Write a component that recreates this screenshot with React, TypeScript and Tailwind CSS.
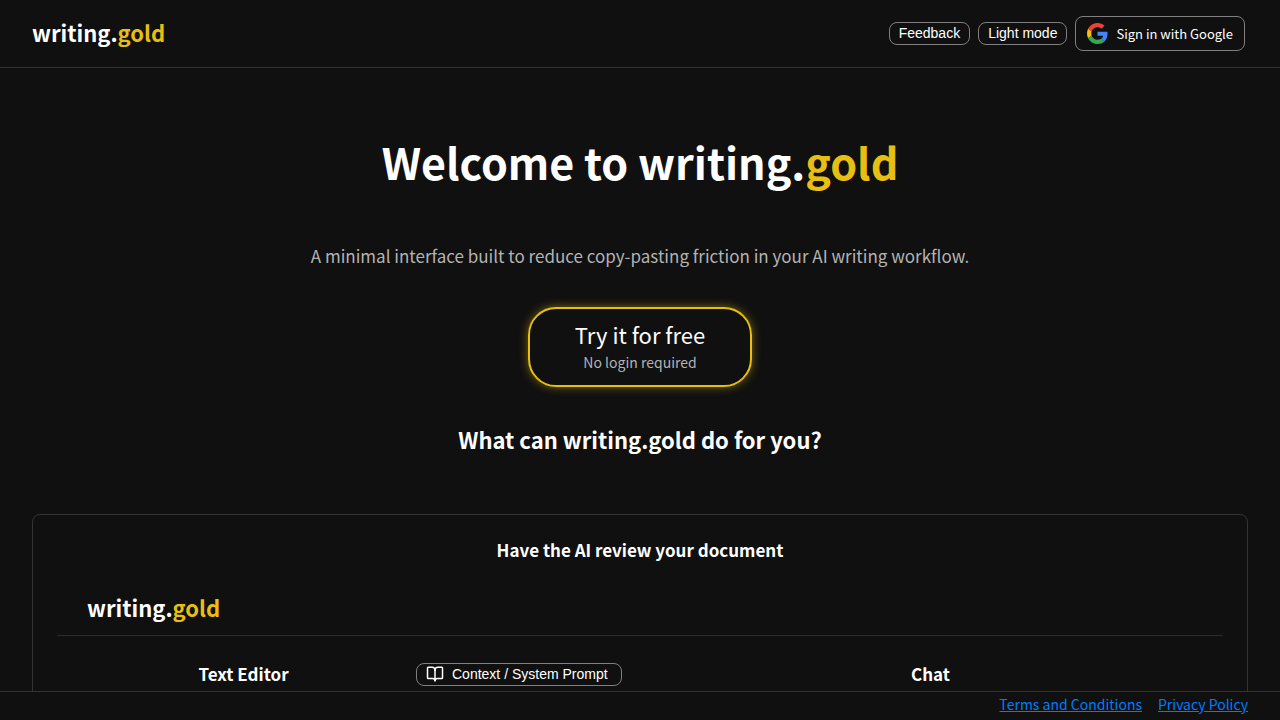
import { BookOpen } from "lucide-react";
import type { ReactNode } from "react";

function Brand() {
  return (
    <>
      writing.<span className="text-[#e6bf12]">gold</span>
    </>
  );
}

function GoogleIcon() {
  return (
    <svg viewBox="0 0 48 48" className="size-[21px]" aria-hidden="true">
      <path
        fill="#EA4335"
        d="M24 9.5c3.54 0 6.71 1.22 9.21 3.6l6.85-6.85C35.9 2.38 30.47 0 24 0 14.62 0 6.51 5.38 2.56 13.22l7.98 6.19C12.43 13.72 17.74 9.5 24 9.5z"
      />
      <path
        fill="#4285F4"
        d="M46.98 24.55c0-1.57-.15-3.09-.38-4.55H24v9.02h12.94c-.58 2.96-2.26 5.48-4.78 7.18l7.73 6c4.51-4.18 7.09-10.36 7.09-17.65z"
      />
      <path
        fill="#FBBC05"
        d="M10.53 28.59c-.48-1.45-.76-2.99-.76-4.59s.27-3.14.76-4.59l-7.98-6.19C.92 16.46 0 20.12 0 24c0 3.88.92 7.54 2.56 10.78l7.97-6.19z"
      />
      <path
        fill="#34A853"
        d="M24 48c6.48 0 11.93-2.13 15.89-5.81l-7.73-6c-2.15 1.45-4.92 2.3-8.16 2.3-6.26 0-11.57-4.22-13.47-9.91l-7.98 6.19C6.51 42.62 14.62 48 24 48z"
      />
    </svg>
  );
}

function SmallButton({ children }: { children: ReactNode }) {
  return (
    <button
      type="button"
      className="flex items-center gap-2 rounded-lg border border-[#808080] px-[9px] pb-px font-['Liberation_Sans',Arial,sans-serif] text-sm leading-5 whitespace-nowrap text-white"
    >
      {children}
    </button>
  );
}

export default function App() {
  return (
    <div className="flex h-screen flex-col bg-[#101010] font-['Noto_Sans_CJK_SC','Noto_Sans',sans-serif] text-white">
      <header className="flex shrink-0 items-center justify-between border-b border-[#333] py-4 pr-[35px] pl-8">
        <div className="pb-1 text-[22px] leading-7 font-bold">
          <Brand />
        </div>
        <div className="flex items-center gap-2">
          <SmallButton>Feedback</SmallButton>
          <SmallButton>Light mode</SmallButton>
          <button
            type="button"
            className="flex h-[35px] items-center gap-2 rounded-lg border border-[#808080] px-[11px] text-[13px]"
          >
            <GoogleIcon />
            Sign in with Google
          </button>
        </div>
      </header>

      <main className="flex min-h-0 flex-1 flex-col items-center overflow-y-auto px-8 [scrollbar-width:none]">
        <h1 className="mt-[61px] text-[43px] leading-16 font-bold">
          Welcome to <Brand />
        </h1>
        <p className="mt-[51px] text-[17px] leading-6 text-[#b3b3b3]">
          A minimal interface built to reduce copy-pasting friction in your AI writing workflow.
        </p>
        <button
          type="button"
          className="mt-[39px] flex h-20 w-56 shrink-0 flex-col items-center justify-center rounded-[28px] border-2 border-[#e6bf12] pb-0.5 shadow-[0_0_10px_#e6bf1280]"
        >
          <span className="text-[22px] leading-8">Try it for free</span>
          <span className="text-sm leading-6 text-[#b3b3b3]">No login required</span>
        </button>
        <h2 className="mt-[38px] text-[22px] leading-7 font-bold">What can writing.gold do for you?</h2>

        <section className="mt-[61px] w-full rounded-lg border border-[#333] px-6 pt-[23px] pb-12">
          <h3 className="text-center text-[17px] leading-6 font-bold">Have the AI review your document</h3>
          <div className="mt-[29px] border-b border-[#2b2b2b] pb-3 pl-[30px] text-[22px] leading-8 font-bold">
            <Brand />
          </div>
          <div className="mt-[22px] grid grid-cols-[345fr_206px_601fr] items-center pl-3.5 text-[17px] leading-8 font-bold">
            <h4 className="text-center">Text Editor</h4>
            <div className="grid font-normal">
              <SmallButton>
                <BookOpen className="size-[18px]" strokeWidth={2} aria-hidden="true" />
                Context / System Prompt
              </SmallButton>
            </div>
            <h4 className="pl-4 text-center">Chat</h4>
          </div>
        </section>
      </main>

      <footer className="flex shrink-0 justify-end gap-4 border-t border-[#333] px-8 pb-1 text-sm leading-6 text-[#007bff]">
        <a href="#terms" className="underline">
          Terms and Conditions
        </a>
        <a href="#privacy" className="underline">
          Privacy Policy
        </a>
      </footer>
    </div>
  );
}
